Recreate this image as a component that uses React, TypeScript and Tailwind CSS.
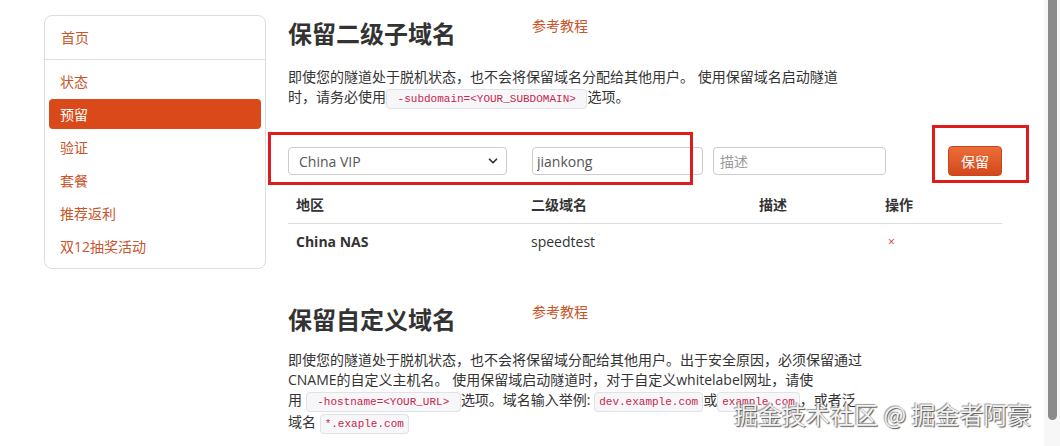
import { ChevronDown } from "lucide-react";

// 侧边栏菜单
const navItems = ["状态", "预留", "验证", "套餐", "推荐返利", "双12抽奖活动"];

function Code({ children }: { children: string }) {
  return (
    <code className="whitespace-pre rounded-[4px] border border-[#e1e1e8] bg-[#f7f7f9] px-1 py-[3px] font-['Liberation_Mono',monospace] text-[11px] text-[#c7254e]">
      {children}
    </code>
  );
}

function SectionTitle({ title }: { title: string }) {
  return (
    <div className="flex h-[34px] items-start">
      <h2 className="w-[244px] text-[24px] font-bold leading-[34px] text-[#333]">{title}</h2>
      <a href="#" className="-mt-[1px] text-[14px] leading-[20px] text-[#c9552b]">
        参考教程
      </a>
    </div>
  );
}

export default function App() {
  return (
    <div className="relative flex h-[446px] w-[1060px] overflow-hidden bg-white font-['Open_Sans','Noto_Sans_CJK_SC',sans-serif] text-[14px] text-[#333]">
      <div className="flex flex-1 gap-[22px] pl-[44px]">
        {/* 侧边栏 */}
        <aside className="mt-[15px] w-[222px] shrink-0 self-start rounded-lg border border-[#ddd]">
          <div className="flex h-[44px] items-center border-b border-[#ddd] px-4 text-[#c9552b]">首页</div>
          <ul className="flex flex-col gap-[3px] px-[4px] pb-[7px] pt-[6px]">
            {navItems.map((item) => (
              <li
                key={item}
                className={
                  item === "预留"
                    ? "flex h-[30px] items-center rounded-[4px] bg-[#d9491a] pl-[11px] text-white"
                    : "flex h-[30px] items-center pl-[11px] text-[#c9552b]"
                }
              >
                {item}
              </li>
            ))}
          </ul>
        </aside>

        {/* 主内容 */}
        <main className="flex-1 pt-[17px]">
          <SectionTitle title="保留二级子域名" />
          <p className="mt-[16px] leading-[20px]">
            即使您的隧道处于脱机状态，也不会将保留域名分配给其他用户。 使用保留域名启动隧道
            <br />
            时，请务必使用<Code>{" -subdomain=<YOUR_SUBDOMAIN> "}</Code>选项。
          </p>

          <div className="mt-[37px] flex h-[30px] items-center">
            <div className="flex h-[28px] w-[219px] items-center justify-between rounded-[4px] border border-[#ccc] pl-[10px] pr-[6px] text-[#555]">
              <span>China VIP</span>
              <ChevronDown size={14} strokeWidth={3} className="text-[#333]" />
            </div>
            <input
              readOnly
              value="jiankong"
              className="ml-[25px] h-[28px] w-[171px] rounded-[4px] border border-[#ccc] px-[4px] text-[#555] outline-none"
            />
            <input
              readOnly
              placeholder="描述"
              className="ml-[10px] h-[28px] w-[173px] rounded-[4px] border border-[#ccc] px-[6px] outline-none placeholder:text-[#999]"
            />
            <button className="ml-[62px] h-[30px] w-[54px] rounded-[4px] border border-[#c9461c] bg-gradient-to-b from-[#ec6d38] to-[#d3481c] text-white">
              保留
            </button>
          </div>

          <table className="mt-[11px] w-[714px] table-fixed border-collapse leading-[20px]">
            <thead>
              <tr className="border-b border-[#ddd]">
                <th className="w-[235px] px-2 py-2 text-left font-bold">地区</th>
                <th className="w-[228px] px-2 py-2 text-left font-bold">二级域名</th>
                <th className="w-[126px] px-2 py-2 text-left font-bold">描述</th>
                <th className="w-[125px] px-2 py-2 text-left font-bold">操作</th>
              </tr>
            </thead>
            <tbody>
              <tr>
                <td className="px-2 py-2 font-bold">China NAS</td>
                <td className="px-2 py-2">speedtest</td>
                <td className="px-2 py-2"></td>
                <td className="px-2 py-2 pl-[11px] text-[12px] text-[#d0302c]">×</td>
              </tr>
            </tbody>
          </table>

          <div className="mt-[43px]">
            <SectionTitle title="保留自定义域名" />
          </div>
          <p className="mt-[13px] leading-[20px]">
            即使您的隧道处于脱机状态，也不会将保留域分配给其他用户。出于安全原因，必须保留通过
            <br />
            CNAME的自定义主机名。 使用保留域启动隧道时，对于自定义whitelabel网址，请使
            <br />
            用 <Code>{" -hostname=<YOUR_URL> "}</Code>选项。域名输入举例: <Code>dev.example.com</Code>或<Code>example.com</Code>，或者泛
            <br />
            域名 <Code>*.exaple.com</Code>
          </p>
        </main>
      </div>

      {/* 滚动条 */}
      <div className="w-[16px] shrink-0 bg-[#f7f7f7]">
        <div className="ml-[4px] h-[420px] w-[9px] rounded-b-full bg-[#8b8b8b]" />
      </div>

      {/* 截图标注 */}
      <div className="pointer-events-none absolute left-[268px] top-[132px] h-[53px] w-[425px] border-[3px] border-[#e01b1d]" />
      <div className="pointer-events-none absolute left-[932px] top-[125px] h-[58px] w-[97px] border-[3px] border-[#e01b1d]" />

      {/* 水印 */}
      <div className="pointer-events-none absolute left-[734px] top-[400px] font-['Noto_Sans_CJK_SC',sans-serif] text-[24px] leading-[28px] text-[#f2f2f2] [text-shadow:1px_1px_1px_#555,-1px_-1px_1px_#999]">
        掘金技术社区 @ 掘金者阿豪
      </div>
    </div>
  );
}
